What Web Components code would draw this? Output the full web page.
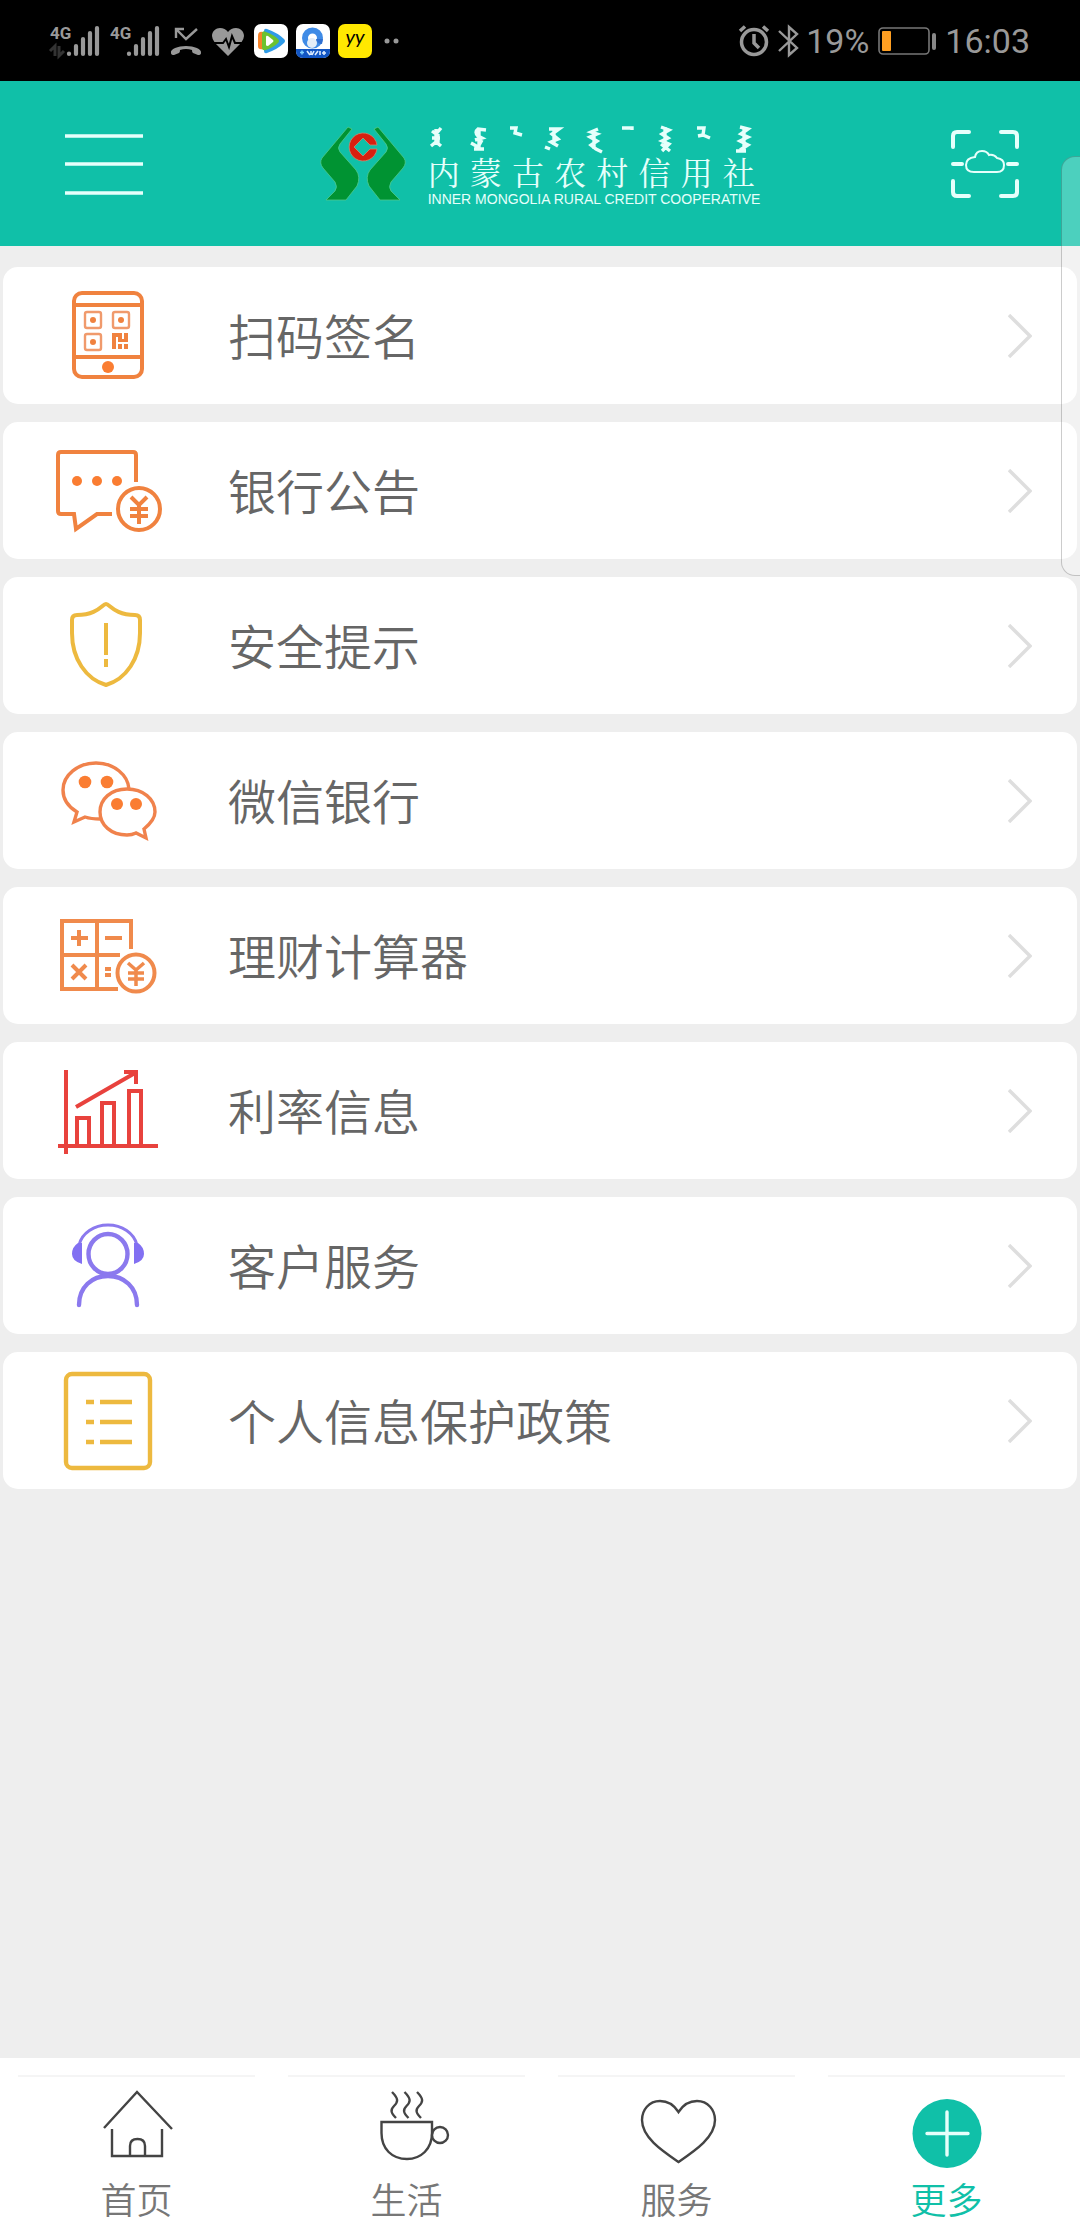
<!DOCTYPE html>
<html lang="zh-CN">
<head>
<meta charset="utf-8">
<meta name="viewport" content="width=device-width, initial-scale=1">
<title>更多</title>
<style>
  body {
    margin: 0;
    background: #eeeeee;
    font-family: Roboto, "Noto Sans CJK SC", sans-serif;
    font-weight: 350;
  }
</style>
</head>
<body>
<bank-app>
  <status-bar slot="top" battery="19%" time="16:03"></status-bar>
  <app-header slot="top" name="内 蒙 古 农 村 信 用 社" caption="INNER MONGOLIA RURAL CREDIT COOPERATIVE"></app-header>

  <menu-row icon="scan">扫码签名</menu-row>
  <menu-row icon="notice">银行公告</menu-row>
  <menu-row icon="shield">安全提示</menu-row>
  <menu-row icon="wechat">微信银行</menu-row>
  <menu-row icon="calculator">理财计算器</menu-row>
  <menu-row icon="rates">利率信息</menu-row>
  <menu-row icon="support">客户服务</menu-row>
  <menu-row icon="policy">个人信息保护政策</menu-row>

  <tab-bar slot="bottom">
    <tab-item icon="home">首页</tab-item>
    <tab-item icon="cup">生活</tab-item>
    <tab-item icon="heart">服务</tab-item>
    <tab-item icon="more" active>更多</tab-item>
  </tab-bar>
</bank-app>

<script>
(function() {

/* Icons of the menu rows, 120 x 117
************************************/
const rowIcons = {
  scan: `<g stroke="#f0823f" stroke-width="4">
      <rect x="26" y="16" width="68" height="84" rx="8"/>
      <path d="M26 28H94M26 80H94"/></g>
    <g stroke="#f09a6c" stroke-width="2.4">
      <rect x="37" y="35" width="16" height="16" rx="2"/>
      <rect x="65" y="35" width="16" height="16" rx="2"/>
      <rect x="37" y="57" width="16" height="16" rx="2"/></g>
    <g fill="#f0823f">
      <circle cx="45" cy="43" r="3"/><circle cx="73" cy="43" r="3"/><circle cx="45" cy="65" r="3"/>
      <path d="M64 56H74V62H76V56H80V65H70V60H68V72H64ZM70 67H74V72H70ZM76 67H80V72H76Z"/>
      <circle cx="60" cy="90" r="6" fill="#fa7d32"/></g>`,
  notice: `<g stroke="#f0823f" stroke-width="4">
      <path d="M88 50V23Q88 20 85 20H13Q10 20 10 23V79Q10 82 13 82H26L28 97L49 82H64"/>
      <circle cx="91" cy="77" r="21"/>
      <path d="M83 65L91 73L99 65M91 73V92M82 77H100M82 84H100"/></g>
    <g fill="#fa7d32"><circle cx="29" cy="49" r="5"/><circle cx="49" cy="49" r="5"/><circle cx="69" cy="49" r="5"/></g>`,
  shield: `<g stroke="#edb93f" stroke-width="4">
      <path d="M58 17C62 17 66 28 87 28Q92 28 92 33V46C92 72 78 92 58 98C38 92 24 72 24 46V33Q24 28 29 28C50 28 54 17 58 17Z"/>
      <path d="M58 36V68M58 72V80"/></g>`,
  wechat: `<g stroke="#f0824c" stroke-width="3.4">
      <path d="M52 77Q43 77 37 75L26 80L29 70C19 64 15 56 15 48C15 33 30 21 48 21C66 21 80 33 81 47"/>
      <path d="M79 47C95 47 107 57 107 70C107 77 102 82 96 87L98 96L88 91Q84 93 79 93C63 93 52 83 52 70C52 57 63 47 79 47Z"/></g>
    <g fill="#fa7d32"><circle cx="37" cy="40" r="6.3"/><circle cx="59" cy="40" r="6.3"/><circle cx="69" cy="62" r="6"/><circle cx="88" cy="62" r="6"/></g>`,
  calculator: `<g stroke="#f08a4c" stroke-width="4">
      <path d="M83 52V24H14V92H70M49 24V92M14 58H72"/>
      <path d="M23 41H40M31 33V49M57 41H74M24 68L38 82M38 68L24 82M57 72H63M57 78H63"/>
      <circle cx="88" cy="76" r="18.5"/>
      <path d="M80 66L88 73L96 66M88 73V89M80 76H96M80 82H96" stroke-width="3.5"/></g>`,
  rates: `<g stroke="#e8423d" stroke-width="4">
      <path d="M18 18V102M10 94H110M29 94V66H41V94M54 94V51H66V94M81 94V39H93V94"/>
      <path d="M28 55L87 21M76 20H88V32"/></g>`,
  support: `<g stroke="#8b79ee" stroke-width="4.4" stroke-linecap="round">
      <ellipse cx="60" cy="47" rx="19.5" ry="20"/>
      <path d="M31 98C31 80 44 69 60 69C76 69 89 80 89 98"/>
      <path d="M31 38C34 26 46 18 60 18C74 18 86 26 89 38" stroke-width="3"/></g>
    <path d="M30 36H34V57Q24 54 24 47Q24 40 30 36ZM90 36H86V57Q96 54 96 47Q96 40 90 36Z" fill="#8270f2"/>`,
  policy: `<g stroke="#edb93f" stroke-width="4.4">
      <rect x="18" y="12" width="84" height="94" rx="6"/>
      <path d="M38 40H46M52 40H84M38 60H46M52 60H84M38 80H46M52 80H84"/></g>`
};

/* Icons of the tabs, 80 x 80
*****************************/
const tabIcons = {
  home: `<path d="M7 38L40 2L75 39M15 39V66H65V39M33 66V56Q33 49 40.500 49Q48 49 48 56V66"/>`,
  cup: `<path d="M14.500 32H65V43C65 59 54 69 40 69C25 69 14.500 59 14.500 43Z"/>
    <circle cx="73" cy="45" r="8"/>
    <path d="M25 2C32 9 31 12 27 16C23 20 24 23 29 28M37.500 2C44.500 9 43.500 12 39.500 16C35.500 20 36.500 23 41.500 28M50 2C57 9 56 12 52 16C48 20 49 23 54 28"/>`,
  heart: `<path d="M41.500 22C37 15 31 11 23 11C12 11 5 20 5 30C5 47 24 60 41.500 72C59 60 78 47 78 30C78 20 71 11 60 11C52 11 46 15 41.500 22Z"/>`,
  more: `<circle cx="40" cy="43.500" r="34.500" fill="#10c0a8" stroke="none"/>
    <path d="M20 43.500H61M40 22V65" stroke="#e6fffb" stroke-width="3.400" stroke-linecap="round"/>`
};

const signal = arrows => `<svg width="50" height="40" viewBox="0 -4 50 40">
  <text x="0" y="14" font-family="Liberation Sans Narrow, Roboto" font-size="17" font-weight="700" fill="#999">4G</text>
  <path d="M19 28.500V29M26 21V29M33 14V29M40 8V29M47 3V29" stroke="#999" stroke-width="4.200" stroke-linecap="round"/>
  ${arrows ? '<path d="M0 26L5 21V31M14 26L9 31V21" stroke="#333" stroke-width="3" fill="none"/>' : ""}
</svg>`;

/* Page frame: bars above and below, the list between them
**********************************************************/
class BankApp extends HTMLElement {
  constructor() {
    super();
    this.attachShadow({mode: "open"}).innerHTML =
    `<style>
      :host {
        position: relative;
        display: flex;
        flex-direction: column;
        min-height: 100vh;
        overflow: hidden;
      }
      main {
        flex: 1;
        display: flex;
        flex-direction: column;
        gap: 18px;
        padding: 21px 3px;
      }
      /* system edge panel, floats over the page */
      .edge {
        position: absolute;
        top: 156px;
        right: -2px;
        box-sizing: border-box;
        width: 21px;
        height: 420px;
        border: 1px solid rgba(0, 0, 0, .2);
        border-radius: 14px 0 0 14px;
        background: rgba(255, 255, 255, .25);
      }
    </style>
    <slot name="top"></slot>
    <main><slot></slot></main>
    <slot name="bottom"></slot>
    <div class="edge"></div>`;
  }
}

class StatusBar extends HTMLElement {
  connectedCallback() {
    this.attachShadow({mode: "open"}).innerHTML =
    `<style>
      :host {
        display: flex;
        justify-content: space-between;
        align-items: center;
        height: 81px;
        padding: 0 50px;
        background: #000;
        color: #999;
        font: 400 34px/40px Roboto, sans-serif;
      }
      div {
        display: flex;
        align-items: center;
        gap: 10px;
      }
      .apps, .right {
        gap: 8px;
      }
      svg {
        display: block;
        flex: none;
        overflow: visible;
      }
    </style>
    <div>
      ${signal(true)}
      ${signal(false)}
      <svg width="32" height="32" viewBox="0 0 32 32" fill="none" stroke="#999" stroke-width="2.400">
        <path d="M14 4H6V13M6 4L16 14L27 4"/>
        <path d="M1 28C0 24 8 21 16 21C24 21 32 24 31 28Q31 30 28 30L23 28Q22 28 22 25Q16 23 10 25Q10 28 9 28L4 30Q1 30 1 28Z" fill="#999" stroke="none"/>
      </svg>
      <svg width="32" height="32" viewBox="0 0 32 32" fill="none">
        <path d="M16 31L3 18Q0 14 0 11C0 6 4 3 8 3Q13 3 16 7Q19 3 24 3C28 3 32 6 32 11Q32 14 29 18Z" fill="#999"/>
        <path d="M1 18H11L14 14L17 22L20 11L23 18H31" stroke="#000" stroke-width="2"/>
      </svg>
      <div class="apps">
        <svg width="34" height="34" viewBox="0 0 34 34">
          <rect width="34" height="34" rx="7" fill="#fff"/>
          <path d="M10 7Q10 4 13 5Q24 9 30 15Q32 17 30 19Q24 25 13 29Q10 30 10 27Z" fill="#2f9be8"/>
          <path d="M9 8Q4 7 4 12V22Q4 26 9 25Z" fill="#f5832a"/>
          <path d="M8 10Q8 6 12 8Q20 11 24 15Q26 17 24 19Q20 23 12 26Q8 27 8 24Z" fill="#6cc230"/>
          <path d="M12 13Q12 11 14 12L19 16Q20 17 19 18L14 22Q12 22 12 21Z" fill="#fff"/>
        </svg>
        <svg width="34" height="34" viewBox="0 0 34 34">
          <rect width="34" height="34" rx="7" fill="#fff"/>
          <circle cx="16.500" cy="14" r="7.500" fill="none" stroke="#3f8be6" stroke-width="6"/>
          <circle cx="16" cy="19" r="5" fill="#e3edf7"/>
          <path d="M20 15Q21 20 26 20L27 15Z" fill="#2f6fd0"/>
          <path d="M0 25H34V27Q34 34 27 34H7Q0 34 0 27Z" fill="#1256c4"/>
          <path d="M4 28.500H8M6 26.500V30.500" stroke="#7fd0ff" stroke-width="1.500"/>
          <path d="M11 27L14 31M15 27V31M18 27L16 31M19 31L22 27M24 27V31M26 29H30M28 27V31" stroke="#dcecff" stroke-width="1.600"/>
        </svg>
        <svg width="34" height="34" viewBox="0 0 34 34">
          <rect width="34" height="34" rx="7" fill="#ffe800"/>
          <text x="17" y="20" text-anchor="middle" font-family="Lato, sans-serif" font-size="20" font-style="italic">yy</text>
        </svg>
      </div>
      <svg width="20" height="32" viewBox="0 0 20 32" fill="#999"><circle cx="5" cy="16" r="2.500"/><circle cx="14" cy="16" r="2.500"/></svg>
    </div>
    <div class="right">
      <svg width="32" height="32" viewBox="0 0 32 32" fill="none" stroke="#999" stroke-width="3.500">
        <circle cx="16" cy="17" r="12.500"/>
        <path d="M16 9V18L21 23M2 6L7 1.500M30 6L25 1.500"/>
      </svg>
      <svg width="20" height="32" viewBox="0 0 20 32" fill="none" stroke="#999" stroke-width="2.400">
        <path d="M1 6L19 23L11 30V2L19 9L1 26"/>
      </svg>
      <span>${this.getAttribute("battery")}</span>
      <svg width="60" height="30" viewBox="0 0 60 30" fill="none">
        <rect x="2" y="2" width="50" height="26" rx="4" stroke="#777" stroke-width="1.600"/>
        <rect x="5" y="5" width="9" height="20" rx="1" fill="#ff9f22"/>
        <rect x="55" y="7" width="4" height="17" rx="2" fill="#888"/>
      </svg>
      <span>${this.getAttribute("time")}</span>
    </div>`;
  }
}

class AppHeader extends HTMLElement {
  connectedCallback() {
    this.attachShadow({mode: "open"}).innerHTML =
    `<style>
      :host {
        display: block;
        background: #10c0a8;
        color: #e6fffb;
      }
      header {
        display: grid;
        grid-template-columns: 1fr auto 1fr;
        align-items: center;
        min-height: 165px;
        padding: 0 60px;
      }
      button {
        padding: 0;
        border: 0;
        background: none;
        justify-self: start;
      }
      button:last-child {
        justify-self: end;
      }
      svg {
        display: block;
      }
      .logo {
        display: flex;
        align-items: center;
        gap: 22px;
      }
      .name {
        font: 400 32px/36px "DejaVu Sans", "Noto Serif CJK SC", "Noto Sans CJK SC", serif;
        white-space: nowrap;
      }
      .caption {
        font: 400 14px/14px "Liberation Sans", Arial, sans-serif;
        white-space: nowrap;
      }
    </style>
    <header>
      <button type="button" aria-label="菜单">
        <svg width="88" height="70" viewBox="0 0 88 70" stroke="#e6fffb" stroke-width="3.4"><path d="M5 7H83M5 35H83M5 64H83"/></svg>
      </button>
      <div class="logo">
        <svg width="86" height="75" viewBox="0 0 86 75">
          <g fill="#009332" stroke="#4fc98a" stroke-width=".8">
            <path d="M28 1L32 3L20 18Q17 22 20 26L36 44Q41 51 37 60L26 74H6L15 65Q18 61 15 56L3 42Q-1 37 2 32Z"/>
            <path d="M58 1L54 3L66 18Q69 22 66 26L50 44Q45 51 49 60L60 74H80L71 65Q68 61 71 56L83 42Q87 37 84 32Z"/>
          </g>
          <path d="M57 19A14 14 0 1 0 57 23H50L43 30L34 21L43 12L50 19Z" fill="#d8200f" stroke="#c98a70" stroke-width=".8"/>
        </svg>
        <div>
          <svg width="327" height="34" viewBox="0 -2 327 34" fill="none" stroke="#e6fffb" stroke-width="3.4">
            <path d="M4 7L8 10L13 4M8 5V21M4 14H12M3 22L8 18L13 22M10 10V20"/>
            <path d="M58 6L50 5Q46 8 50 12L54 14L47 16M51 7V24M43 19L50 23L54 16M46 25H56"/>
            <path d="M82 4H88L87 9L94 11"/>
            <path d="M121 5H131L124 10L130 15L123 18L130 22M126 5V21M117 23L122 25"/>
            <path d="M170 5L163 8L169 10L162 13L169 17L163 21L168 25L174 28M166 6V25"/>
            <path d="M194 4H204V6"/>
            <path d="M233 3L241 6L234 10L240 14L234 17L241 20L234 27M237 3V26M233 20L242 27"/>
            <path d="M269 4H276L275 11L270 12M275 11L282 14"/>
            <path d="M312 3L320 5L313 10L320 13L312 17L320 21L312 26M316 3V27M308 27H318"/>
          </svg>
          <div class="name">${this.getAttribute("name")}</div>
          <div class="caption">${this.getAttribute("caption")}</div>
        </div>
      </div>
      <button type="button" aria-label="扫一扫">
        <svg width="70" height="70" viewBox="0 0 70 70" fill="none" stroke="#e6fffb" stroke-width="4" stroke-linecap="round">
          <path d="M19 3H7Q3 3 3 7V18M51 3H63Q67 3 67 7V18M3 52V63Q3 67 7 67H19M67 52V63Q67 67 63 67H51M3 35H12M58 35H67"/>
          <path d="M24 43Q16 43 16 36Q16 29 25 28Q26 22 32 22Q37 22 39 26Q44 25 47 29Q54 30 54 36Q54 43 47 43Z" stroke-width="2"/>
        </svg>
      </button>
    </header>`;
  }
}

class MenuRow extends HTMLElement {
  connectedCallback() {
    this.attachShadow({mode: "open"}).innerHTML =
    `<style>
      :host {
        display: block;
      }
      a {
        display: flex;
        align-items: center;
        padding: 10px 45px;
        border-radius: 15px;
        background: #fff;
        color: #666;
        font-size: 48px;
        line-height: 72px;
        text-decoration: none;
      }
      svg {
        display: block;
        flex: none;
        fill: none;
      }
      span {
        flex: 1;
        margin-left: 60px;
        padding-top: 6px;
      }
    </style>
    <a href="#${this.getAttribute("icon")}">
      <svg width="120" height="117" viewBox="0 0 120 117">${rowIcons[this.getAttribute("icon")]}</svg>
      <span><slot></slot></span>
      <svg width="24" height="44" viewBox="0 0 24 44" stroke="#dedede" stroke-width="3.4"><path d="M1 1L22 22L1 43"/></svg>
    </a>`;
  }
}

class TabBar extends HTMLElement {
  constructor() {
    super();
    this.attachShadow({mode: "open"}).innerHTML =
    `<style>
      :host {
        display: block;
        background: #fff;
      }
      nav {
        display: flex;
        padding: 17px 0 6px;
      }
    </style>
    <nav><slot></slot></nav>`;
  }
}

class TabItem extends HTMLElement {
  connectedCallback() {
    this.attachShadow({mode: "open"}).innerHTML =
    `<style>
      :host {
        flex: 1;
        padding: 0 15px 0 18px;
        color: #777;
      }
      :host([active]) {
        color: #10c0a8;
      }
      a {
        display: flex;
        flex-direction: column;
        align-items: center;
        padding-top: 13px;
        border-top: 2px solid #f5f5f5;
        color: inherit;
        font-size: 36px;
        line-height: 64px;
        text-decoration: none;
      }
      svg {
        display: block;
        overflow: visible;
        fill: none;
        stroke: #444;
        stroke-width: 2.4;
      }
    </style>
    <a href="#${this.getAttribute("icon")}">
      <svg width="80" height="80" viewBox="0 0 80 80">${tabIcons[this.getAttribute("icon")]}</svg>
      <span><slot></slot></span>
    </a>`;
  }
}

customElements.define("bank-app", BankApp);
customElements.define("status-bar", StatusBar);
customElements.define("app-header", AppHeader);
customElements.define("menu-row", MenuRow);
customElements.define("tab-bar", TabBar);
customElements.define("tab-item", TabItem);

})();
</script>
</body>
</html>
